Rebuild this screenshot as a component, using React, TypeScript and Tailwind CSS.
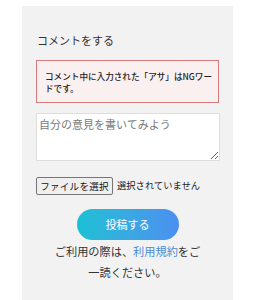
import React from "react";

export default function App() {
  const jp = { fontFamily: '"Noto Sans CJK JP", "Noto Sans", sans-serif' };
  return (
    <div className="w-[255px] h-[300px] bg-white overflow-hidden" style={jp}>
      <div className="ml-[22px] mt-[6px] w-[211px] h-[294px] bg-[#f2f2f2] px-[14px] pt-[26px]">
        <h2 className="text-[11px] leading-[16px] text-[#333] font-normal ml-[1px]">コメントをする</h2>
        <div className="mt-[12px] h-[43px] border border-[#d87b7d] bg-[#fbf0f0] pl-[8px] pr-[4px] pt-[9px] text-[8.6px] leading-[12px] text-[#222] font-medium">
          コメント中に入力された「アサ」はNGワードです。
        </div>
        <textarea
          className="mt-[10px] block w-[184px] h-[48px] bg-white border border-[#dedede] px-[2px] py-[2px] text-[11px] leading-[16px] text-[#333] placeholder:text-[#7a7a7a] outline-none"
          placeholder="自分の意見を書いてみよう"
          style={jp}
        />
        <div className="mt-[16px] flex items-center h-[18px]">
          <div className="h-[18px] w-[77px] border border-[#767676] rounded-[2px] bg-[#efefef] flex items-center justify-center text-[9.5px] text-[#111] tracking-[0.3px]">
            ファイルを選択
          </div>
          <span className="ml-[4px] text-[9.3px] text-[#222]">選択されていません</span>
        </div>
        <div className="mt-[14px] flex justify-center">
          <button
            className="w-[102px] h-[31px] rounded-full bg-gradient-to-r from-[#18c0d4] to-[#4b8ff0] text-white text-[11px]"
            style={jp}
          >
            投稿する
          </button>
        </div>
        <p className="mt-[1px] text-center text-[11.2px] leading-[21px] text-[#333]">
          ご利用の際は、<span className="text-[#4a8bd8]">利用規約</span>をご
          <br />
          一読ください。
        </p>
      </div>
    </div>
  );
}
